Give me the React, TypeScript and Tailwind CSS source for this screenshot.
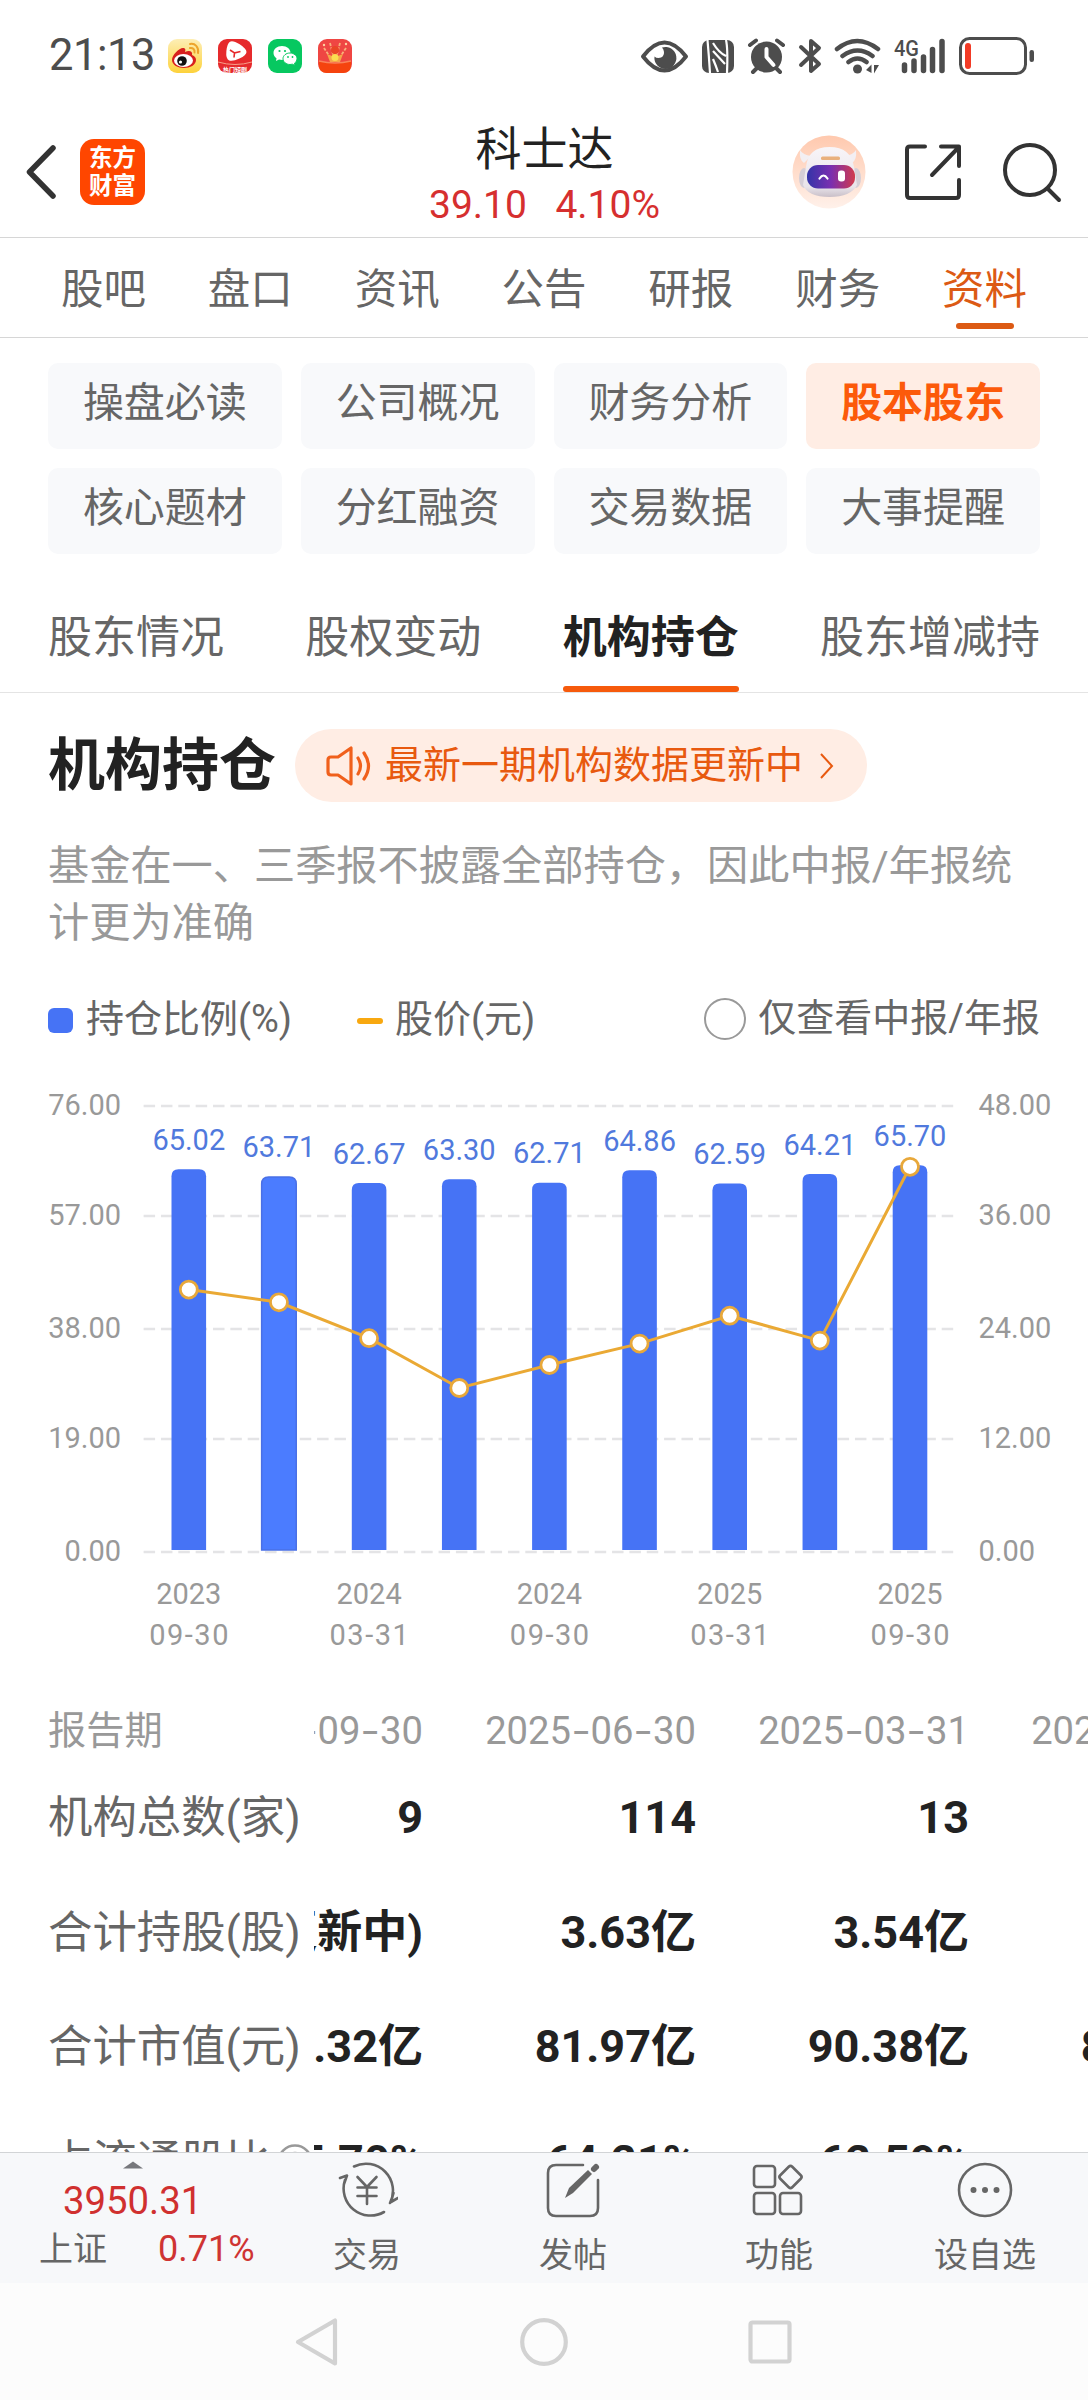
import type { ReactNode } from 'react';

const SANS = "font-['Roboto','Noto_Sans_CJK_SC',sans-serif]";

const mainTabs = ['股吧', '盘口', '资讯', '公告', '研报', '财务', '资料'];

const chips = [
  '操盘必读', '公司概况', '财务分析', '股本股东',
  '核心题材', '分红融资', '交易数据', '大事提醒',
];

const subTabs = ['股东情况', '股权变动', '机构持仓', '股东增减持'];

const bars = [
  { ratio: 65.02, lineY: 1289.6, date: ['2023', '09-30'] },
  { ratio: 63.71, lineY: 1302.3 },
  { ratio: 62.67, lineY: 1338.2, date: ['2024', '03-31'] },
  { ratio: 63.3, lineY: 1388 },
  { ratio: 62.71, lineY: 1365, date: ['2024', '09-30'] },
  { ratio: 64.86, lineY: 1343.6 },
  { ratio: 62.59, lineY: 1315.7, date: ['2025', '03-31'] },
  { ratio: 64.21, lineY: 1340.6 },
  { ratio: 65.7, lineY: 1166.8, date: ['2025', '09-30'] },
];

const gridLines = [
  { y: 1106, left: '76.00', right: '48.00' },
  { y: 1216, left: '57.00', right: '36.00' },
  { y: 1329, left: '38.00', right: '24.00' },
  { y: 1439, left: '19.00', right: '12.00' },
  { y: 1552, left: '0.00', right: '0.00' },
];

const rows = [
  { label: '机构总数(家)', cells: ['9', '114', '13', ''] },
  { label: '合计持股(股)', cells: ['(更新中)', '3.63亿', '3.54亿', ''] },
  { label: '合计市值(元)', cells: ['.32亿', '81.97亿', '90.38亿', '85.26亿'] },
  { label: '占流通股比', cells: ['65.70%', '64.21%', '62.59%', ''], help: true },
];

const StatusBar = () => (
  <div className="flex h-[112px] items-center pl-[49px] pr-[54px] text-[#4d4d4d]">
    <span className="w-[119px] text-[43.500px] leading-none tracking-[-0.500px]">21:13</span>
    <div className="flex gap-4">
      {/* weibo */}
      <svg width="34" height="34" viewBox="0 0 34 34">
        <defs>
          <linearGradient id="wb" x1="0" y1="0" x2="0" y2="1">
            <stop offset="0" stopColor="#fdeeb5" />
            <stop offset="1" stopColor="#fdd23c" />
          </linearGradient>
        </defs>
        <rect width="34" height="34" rx="9" fill="url(#wb)" />
        <path d="M4 21c0-5 7-12 11-12 2 0 3 1 2 4 4-2 8-1 7 3 3 1 4 3 4 5 0 5-6 8-12 8S4 26 4 21z" fill="#d8201d" />
        <ellipse cx="15.500" cy="21.500" rx="9.500" ry="6.500" fill="#fff" />
        <circle cx="14" cy="22" r="4.800" fill="#111" />
        <circle cx="12.500" cy="23" r="1.600" fill="#fff" />
        <path d="M22 5c5-1 9 3 8 9M22 9c3-.5 5 1.500 4.500 4.500" fill="none" stroke="#eda52c" strokeWidth="2" strokeLinecap="round" />
      </svg>
      {/* video app */}
      <svg width="34" height="34" viewBox="0 0 34 34">
        <rect width="34" height="34" rx="9" fill="#e62a2c" />
        <path d="M12.500 3.500c3-2 15 6 15 9.500s-12 9-16 7.500S9.500 5.500 12.500 3.500z" fill="#fff" stroke="#fff" strokeWidth="2" strokeLinejoin="round" />
        <path d="M12 11l4.500 3 6-1.500-6 1.500-.5 4.500" fill="none" stroke="#e62a2c" strokeWidth="1.600" />
        <path d="M0 23q17 5 34 0" fill="none" stroke="#f7a08a" strokeWidth="1" />
        <text x="17" y="32.500" textAnchor="middle" fontSize="6" fontWeight="700" fill="#fff">热门短剧</text>
      </svg>
      {/* wechat */}
      <svg width="34" height="34" viewBox="0 0 34 34">
        <rect width="34" height="34" rx="9" fill="#07c860" />
        <path d="M14 7c-5 0-8.500 3-8.500 7 0 2.200 1.200 4 3 5.200L8 22l3-1.500c1 .3 2 .4 3 .4 5 0 8.500-3 8.500-6.900S19 7 14 7z" fill="#fff" />
        <path d="M22 14c-4 0-7 2.600-7 5.700S18 25.500 22 25.500c.8 0 1.600-.1 2.400-.3L27 26.500l-.5-2.300c1.500-1 2.500-2.700 2.500-4.500 0-3.100-3-5.700-7-5.700z" fill="#fff" stroke="#07c860" />
        <g fill="#07c860">
          <circle cx="11.500" cy="12" r="1.100" /><circle cx="17" cy="12" r="1.100" />
          <circle cx="20" cy="18" r=".9" /><circle cx="24.500" cy="18" r=".9" />
        </g>
      </svg>
      {/* red packet */}
      <svg width="34" height="34" viewBox="0 0 34 34">
        <rect width="34" height="34" rx="9" fill="#ef4643" />
        <path d="M6 9l8 12M12 4l4 15M28 9l-8 12M22 4l-4 15" stroke="#f8b07a" strokeWidth="1.800" strokeDasharray="3 1.500" />
        <circle cx="17" cy="11" r="4" fill="#ea4526" />
        <circle cx="6" cy="6" r="1.200" fill="#ffd0a0" />
        <circle cx="28" cy="5" r="1.200" fill="#ffd0a0" />
        <path d="M9 15l5 2 3-1 3 1 5-2-3 8H12z" fill="#f5a64a" />
        <circle cx="17" cy="18.500" r="3.500" fill="#fbdc50" />
        <path d="M1 22q16 3 32 0v4q0 8-8 8H9q-8 0-8-8z" fill="#f5430e" />
        <path d="M1 22q16 4 32 0" fill="none" stroke="#f9825a" strokeWidth="1.500" />
      </svg>
    </div>
    <svg className="ml-auto" width="394" height="40" viewBox="640 36 394 40" fill="none" stroke="#4d4d4d">
      <path d="M643 56.500q21.500-28 43 0q-21.500 28-43 0z" strokeWidth="4" strokeLinejoin="round" />
      <path d="M662 47.500a11 11 0 1 1-7.500 9q1.500 1.500 4 1.500 6-.5 5.500-6-.3-2.800-2-4.500z" fill="#4d4d4d" stroke="none" />
      <rect x="702" y="40" width="32" height="33" rx="7" fill="#4d4d4d" stroke="none" />
      <path d="M707.500 40q1.500 17 2.500 33M726 40q2 8 1 33M713 43q6 10 13 13M713 51l12 13M713 59q3 7 5 13" stroke="#fff" strokeWidth="2.200" />
      <circle cx="766.500" cy="57" r="15.500" fill="#4d4d4d" stroke="none" />
      <path d="M766.500 49v8l7 8" stroke="#fff" strokeWidth="4" strokeLinecap="round" strokeLinejoin="round" />
      <path d="M750 45l6-4.500M783 45l-6-4.500M753 72l4-4M780 72l-4-4" strokeWidth="4" strokeLinecap="round" />
      <path d="M801 47l18 17-8 7V41l8 7-18 17" strokeWidth="4" strokeLinecap="round" strokeLinejoin="round" />
      <path d="M837 49q20-16 41 0M842.500 56q15-11 30 0M848.500 62q9-7 18 0" strokeWidth="4.500" strokeLinecap="round" />
      <circle cx="857.500" cy="69" r="4.500" fill="#4d4d4d" stroke="none" />
      <path d="M866 70l5.500-5.500v8.500zM874 65v8.500l5-8.500z" fill="#4d4d4d" stroke="none" />
      <text x="894" y="55.500" fontSize="22" fontWeight="500" textLength="25" lengthAdjust="spacingAndGlyphs" fill="#4d4d4d" stroke="none">4G</text>
      <path d="M904.500 65v5.500M914 61v9.500M923.500 57v13.500M932.500 49.500v21M942 41.500v29" strokeWidth="5.500" strokeLinecap="round" />
      <rect x="960.500" y="38.500" width="65" height="35" rx="9" strokeWidth="3" />
      <rect x="965" y="43" width="6" height="26" rx="3" fill="#f23a25" stroke="none" />
      <rect x="1029.500" y="50" width="4.500" height="12" rx="2.200" fill="#4d4d4d" stroke="none" />
    </svg>
  </div>
);

const Header = () => (
  <header className="flex h-[126px] items-center border-b border-[#d6d6d6] pb-[5px] pl-[26px] pr-[26px]">
    <svg width="30" height="54" viewBox="0 0 30 54">
      <path d="M27 3L3.500 27 27 51" fill="none" stroke="#333" strokeWidth="5.500" strokeLinecap="round" strokeLinejoin="round" />
    </svg>
    <div className="ml-6 flex h-[66px] w-[65px] flex-col items-center justify-center rounded-[14px] bg-[#ff4600] text-[23.500px] font-bold leading-[28px] text-white">
      <span>东方</span>
      <span>财富</span>
    </div>
    <div className="ml-[284px] w-[231px] pt-[9px] text-center">
      <div className="text-[46px] leading-[56px] text-[#222]">科士达</div>
      <div className="flex h-[56px] items-center justify-between pt-px text-[39px] text-[#d62f2f]">
        <span>39.10</span>
        <span>4.10%</span>
      </div>
    </div>
    <svg className="ml-auto" width="74" height="74" viewBox="0 0 74 74">
      <defs>
        <linearGradient id="robotBg" x1="0" y1="0" x2="0" y2="1">
          <stop offset="0" stopColor="#ffc9ae" />
          <stop offset="1" stopColor="#fff1ea" />
        </linearGradient>
        <linearGradient id="robotHead" x1="0" y1="0" x2="0" y2="1">
          <stop offset="0" stopColor="#f8f5f8" />
          <stop offset=".8" stopColor="#e9e4ea" />
          <stop offset="1" stopColor="#c9bfc8" />
        </linearGradient>
        <linearGradient id="visor" x1="0" y1="0" x2="1" y2="0">
          <stop offset="0" stopColor="#3434a8" />
          <stop offset=".5" stopColor="#7a2fb0" />
          <stop offset="1" stopColor="#d13a4c" />
        </linearGradient>
      </defs>
      <circle cx="37" cy="37" r="36.500" fill="url(#robotBg)" />
      <path d="M8 15q-1 10 4 13l7-7q-8-1-11-6zM64 15q1 10-4 13l-7-7q8-1 11-6z" fill="#f3eff2" />
      <ellipse cx="12" cy="43" rx="5" ry="10" fill="#d5ced6" />
      <ellipse cx="64" cy="43" rx="5" ry="10" fill="#d5ced6" />
      <path d="M14 32q2-20 23.500-20T62 32l3 18q-6 12-27.500 12T11 50z" fill="url(#robotHead)" />
      <rect x="29" y="21.500" width="19" height="3.500" rx="1.500" fill="#e9b07c" />
      <rect x="15" y="30" width="48" height="23.500" rx="11" fill="url(#visor)" />
      <path d="M27.500 43.500q4-6 8 0" fill="none" stroke="#fff" strokeWidth="2.200" strokeLinecap="round" />
      <rect x="46" y="35.500" width="7" height="11" rx="3" fill="#fff" />
    </svg>
    <svg className="ml-[37px]" width="60" height="60" viewBox="0 0 60 60" fill="none" stroke="#333" strokeWidth="4" strokeLinecap="round" strokeLinejoin="round">
      <path d="M22 4.500H7q-3 0-3 3V53q0 3 3 3h46q3 0 3-3V38M38 4.500h18V24M55 6L29 33" />
    </svg>
    <svg className="ml-[39px]" width="60" height="62" viewBox="0 0 60 62" fill="none" stroke="#333" strokeWidth="4" strokeLinecap="round">
      <circle cx="28" cy="29" r="25" />
      <path d="M46 48l11 11" />
    </svg>
  </header>
);

const MainTabs = () => (
  <nav className="flex h-[100px] border-b border-[#d6d6d6] px-[30px]">
    {mainTabs.map((tab) => (
      <div
        key={tab}
        className={`relative flex flex-1 justify-center text-[42.500px] leading-[103px] ${tab === '资料' ? 'text-[#dc5a14]' : 'text-[#666]'}`}
      >
        {tab}
        {tab === '资料' && (
          <span className="absolute bottom-2 h-[6px] w-[58px] rounded-full bg-[#dc5a14]" />
        )}
      </div>
    ))}
  </nav>
);

const Chips = () => (
  <div className="mt-[25px] grid grid-cols-4 gap-[19px] px-12">
    {chips.map((chip) => (
      <div
        key={chip}
        className={`h-[86px] rounded-[10px] text-center text-[41px] leading-[81px] ${
          chip === '股本股东' ? 'bg-[#ffede4] font-bold text-[#fc5a0a]' : 'bg-[#f8f9fb] text-[#666]'
        }`}
      >
        {chip}
      </div>
    ))}
  </div>
);

const SubTabs = () => (
  <nav className="mt-[24px] flex h-[115px] justify-between border-b border-[#e4e4e4] px-12 text-[44px] leading-[121px]">
    {subTabs.map((tab) => (
      <div key={tab} className={`relative ${tab === '机构持仓' ? 'font-bold text-[#222]' : 'text-[#666]'}`}>
        {tab}
        {tab === '机构持仓' && (
          <span className="absolute bottom-0 left-0 h-[6px] w-full rounded-[3px] bg-[#f65a0c]" />
        )}
      </div>
    ))}
  </nav>
);

const Intro = () => (
  <section className="px-12">
    <div className="mt-9 flex h-[73px] items-center">
      <h1 className="text-[57px] font-bold leading-[66px] text-[#222]">机构持仓</h1>
      <div className="ml-[19px] flex h-[73px] w-[572px] items-center rounded-full bg-[#ffede4] pl-[30px] text-[#e8590f]">
        <svg width="48" height="42" viewBox="0 0 48 42" fill="none" stroke="#f0601c" strokeWidth="3.200" strokeLinecap="round" strokeLinejoin="round">
          <path d="M26 3v36L13 30H6q-3 0-3-3V15q0-3 3-3h7zM33 13q5 8 0 16M39 8q9 13 0 26" />
        </svg>
        <span className="ml-3 pb-[2px] text-[38px] leading-[70px]">最新一期机构数据更新中</span>
        <svg className="ml-4" width="16" height="28" viewBox="0 0 16 28">
          <path d="M2 2l11 12L2 26" fill="none" stroke="#e8590f" strokeWidth="2" />
        </svg>
      </div>
    </div>
    <p className="mt-[36px] whitespace-nowrap text-[41.200px] leading-[57px] text-[#999]">
      基金在一、三季报不披露全部持仓，因此中报/年报统
      <br />
      计更为准确
    </p>
    <div className="mt-[42px] flex h-[50px] items-center text-[38px] leading-[50px] text-[#666]">
      <span className="mt-0.5 size-[25px] rounded-[6px] bg-[#4673f5]" />
      <span className="ml-[13px]">持仓比例(%)</span>
      <span className="ml-[65px] mt-1 h-[6px] w-[26px] rounded-full bg-[#f8a810]" />
      <span className="ml-3">股价(元)</span>
      <span className="ml-auto size-[42px] rounded-full border-2 border-[#999]" />
      <span className="ml-3 pb-[2px]">仅查看中报/年报</span>
    </div>
  </section>
);

const barX = (i: number) => 188.8 + i * 90.15;
const barTop = (ratio: number) => 1550 - (ratio / 76) * 445;

const Chart = () => (
  <svg className="mt-[16px] block" width="1088" height="616" viewBox="0 1060 1088 616" fontSize="29">
    {gridLines.map((line) => (
      <g key={line.y}>
        <path d={`M143.600 ${line.y}H953.500`} stroke="#e4e4e6" strokeWidth="2.400" strokeDasharray="11.500 5.850" />
        <text x="121" y={line.y + 8.5} textAnchor="end" fill="#999">{line.left}</text>
        <text x="978.500" y={line.y + 8.5} fill="#999">{line.right}</text>
      </g>
    ))}
    {bars.map((bar, i) => {
      const x = barX(i);
      const top = barTop(bar.ratio);
      return (
        <g key={i}>
          <path
            d={`M${x - 17.3} 1550V${top + 7}q0-7 7-7h20.600q7 0 7 7V1550z`}
            fill={i === 1 ? '#4b7cff' : '#4673f5'}
            stroke={i === 1 ? '#4a70e6' : 'none'}
            strokeWidth="1.500"
          />
          <text x={x} y={top - 19.5} textAnchor="middle" fill="#5079dd">{bar.ratio.toFixed(2)}</text>
          {bar.date && (
            <g fill="#999" textAnchor="middle">
              <text x={x} y="1603.500">{bar.date[0]}</text>
              <text x={x + 0.8} y="1644.500" letterSpacing="1.500">{bar.date[1]}</text>
            </g>
          )}
        </g>
      );
    })}
    <polyline
      points={bars.map((bar, i) => `${barX(i)},${bar.lineY}`).join(' ')}
      fill="none"
      stroke="#eaa934"
      strokeWidth="3"
    />
    {bars.map((bar, i) => (
      <circle key={i} cx={barX(i)} cy={bar.lineY} r="8.500" fill="#fff" stroke="#e8a83a" strokeWidth="2.800" />
    ))}
  </svg>
);

// Hyphens are stretched a little so the dates keep their wide dashes.
const DateText = ({ value }: { value: string }) => (
  <>
    {value.split('-').map((part, i) => (
      <span key={i}>
        {i > 0 && <span className="mx-[4.500px] inline-block scale-x-150">-</span>}
        {part}
      </span>
    ))}
  </>
);

const TableRow = ({ label, cells }: { label: ReactNode; cells: ReactNode[] }) => (
  <>
    <div className="w-[266px] shrink-0 whitespace-nowrap">{label}</div>
    <div className="flex min-w-0 flex-1 overflow-hidden">
      <div className="-ml-[164px] flex shrink-0">
        {cells.map((cell, i) => (
          <div key={i} className="w-[273px] shrink-0 whitespace-nowrap text-right">{cell}</div>
        ))}
      </div>
    </div>
  </>
);

const HoldingTable = () => (
  <section className="min-h-0 flex-1 overflow-hidden pl-12">
    <div className="mt-[20px] flex h-[70px] items-center text-[38.200px] leading-[70px] text-[#999]">
      <TableRow
        label="报告期"
        cells={['2025-09-30', '2025-06-30', '2025-03-31', '2024-12-31'].map((d) => (
          <DateText key={d} value={d} />
        ))}
      />
    </div>
    <div className="-mt-[5px]">
      {rows.map((row) => (
        <div key={row.label} className="flex h-[114.500px] items-center text-[44.400px] leading-[100px]">
          <TableRow
            label={
              <span className="flex items-center text-[#666]">
                {row.label}
                {row.help && (
                  <svg className="ml-[7px]" width="36" height="36" viewBox="0 0 36 36" fill="none" stroke="#999" strokeWidth="2.500">
                    <circle cx="18" cy="18" r="16.500" />
                    <path d="M13 14q0-5 5-5t5 5q0 3-5 6v3M18 26v2" />
                  </svg>
                )}
              </span>
            }
            cells={row.cells.map((cell, i) => (
              <span key={i} className="text-[45px] font-bold text-[#222]">{cell}</span>
            ))}
          />
        </div>
      ))}
    </div>
  </section>
);

const toolbar = [
  {
    label: '交易',
    icon: (
      <>
        <path d="M17 6.500A27 27 0 0 1 53 43M47 52A27 27 0 0 1 8 20M3 18l7-2.500-3 8.500M61 38l-7 4 2.500-9" />
        <path d="M20.500 17l9.500 10 9.500-10M30 27v17M20.500 27.500h19M20.500 36h19" />
      </>
    ),
  },
  {
    label: '发帖',
    icon: (
      <>
        <path d="M40 5H13q-8 0-8 8v35q0 8 8 8h34q8 0 8-8V20" />
        <path d="M22 38l4-10L45 10l4 4-19 19z" fill="#666" stroke="none" />
        <path d="M51 9l2-2" strokeWidth="6" />
      </>
    ),
  },
  {
    label: '功能',
    icon: (
      <>
        <rect x="5" y="6" width="21" height="21" rx="3" />
        <rect x="5" y="33" width="21" height="21" rx="3" />
        <rect x="31" y="33" width="21" height="21" rx="3" />
        <rect x="33" y="8.500" width="17" height="17" rx="2.500" transform="rotate(45 41.500 17)" />
      </>
    ),
  },
  {
    label: '设自选',
    icon: (
      <>
        <circle cx="30" cy="30" r="26" />
        <path d="M18.500 30h.01M30 30h.01M41.500 30h.01" strokeWidth="6" />
      </>
    ),
  },
];

const Toolbar = () => (
  <footer className="flex h-[131px] shrink-0 border-t border-[#d2d4d6] bg-[#f7f8fa]">
    <div className="flex w-[264px] flex-col">
      <svg className="ml-[123px] mt-2" width="20" height="8" viewBox="0 0 20 8">
        <path d="M0 7.500L10 .5l10 7z" fill="#77787c" />
      </svg>
      <div className="ml-[63px] mt-[10px] h-[44px] text-[38.300px] leading-[44px] text-[#d0302f]">3950.31</div>
      <div className="ml-[39px] flex h-[52px] items-center text-[34px] leading-[52px] text-[#666]">
        上证
        <span className="ml-[51px] text-[36px] text-[#cf3433]">0.71%</span>
      </div>
    </div>
    {toolbar.map((item) => (
      <div key={item.label} className="flex flex-1 flex-col items-center">
        <svg className="mt-[7px]" width="62" height="60" viewBox="-1 0 62 60" fill="none" stroke="#666" strokeWidth="2.600" strokeLinecap="round" strokeLinejoin="round">
          {item.icon}
        </svg>
        <span className="mt-[10px] text-[34px] leading-[50px] text-[#666]">{item.label}</span>
      </div>
    ))}
  </footer>
);

const SystemNav = () => (
  <div className="flex h-[117px] shrink-0 items-center justify-center gap-[178px] bg-[#fcfcfc]">
    <svg width="48" height="50" viewBox="0 0 48 50" fill="none" stroke="#d2d2d2" strokeWidth="4.200" strokeLinejoin="round">
      <path d="M41 3.500v43L4 25z" />
    </svg>
    <svg width="48" height="50" viewBox="0 0 48 50" fill="none" stroke="#d2d2d2" strokeWidth="4.200">
      <circle cx="24" cy="25" r="21.800" />
    </svg>
    <svg width="48" height="50" viewBox="0 0 48 50" fill="none" stroke="#d2d2d2" strokeWidth="4.200">
      <rect x="4.500" y="5.500" width="39" height="39" rx="2" />
    </svg>
  </div>
);

export default function App() {
  return (
    <div className={`flex h-[2400px] w-[1088px] flex-col overflow-hidden bg-white ${SANS}`}>
      <StatusBar />
      <Header />
      <MainTabs />
      <Chips />
      <SubTabs />
      <Intro />
      <Chart />
      <HoldingTable />
      <Toolbar />
      <SystemNav />
    </div>
  );
}
